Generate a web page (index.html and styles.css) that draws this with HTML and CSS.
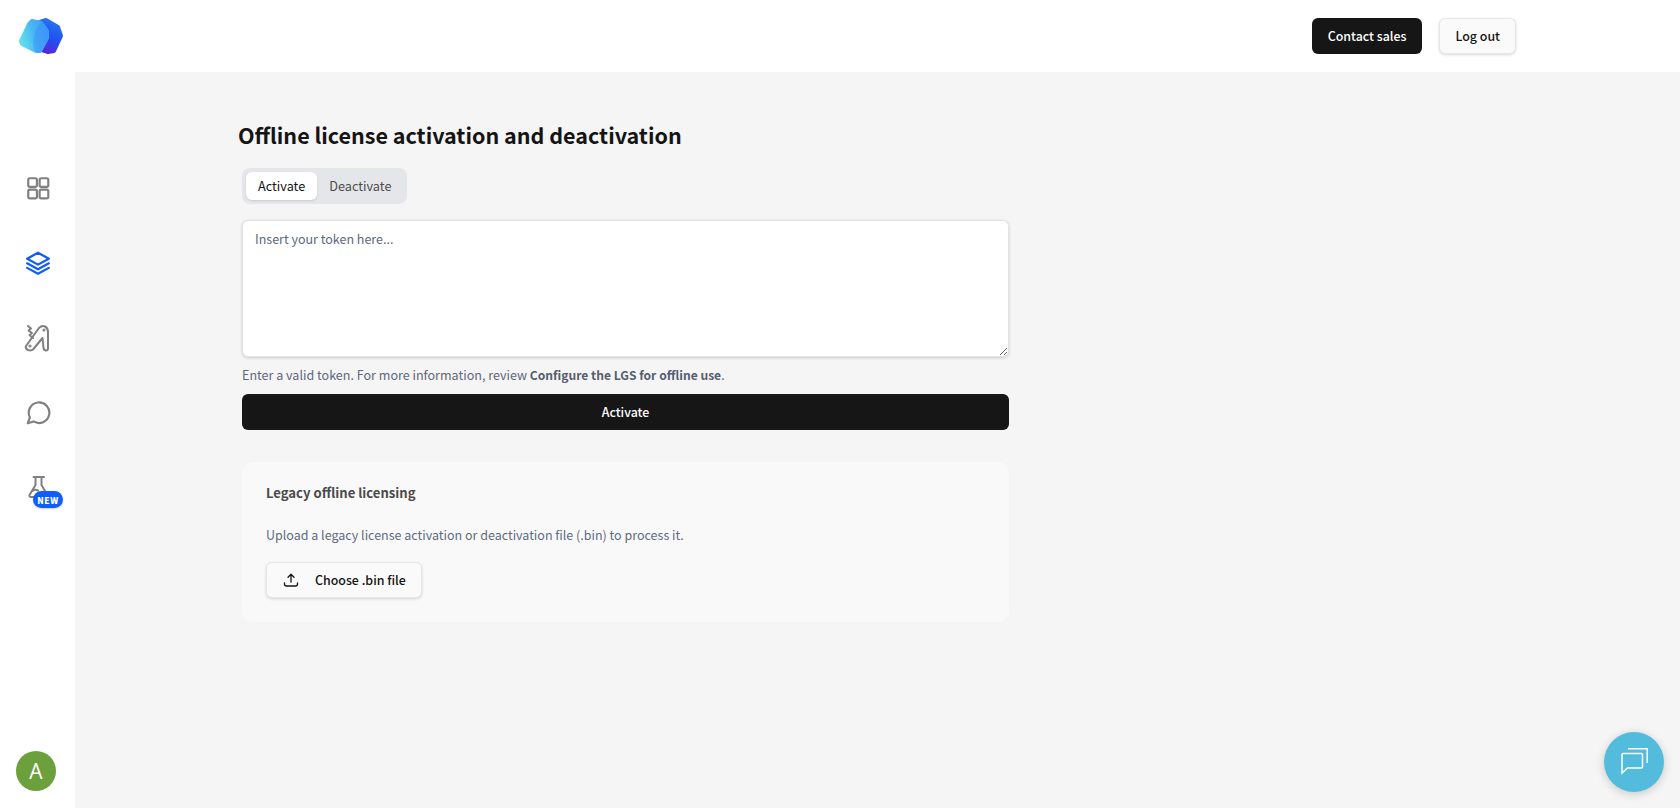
FILE: index.html
```html
<!DOCTYPE html>
<html lang="en">
<head>
<meta charset="utf-8">
<title>Offline license activation</title>
<link rel="stylesheet" href="styles.css">
</head>
<body>
<header class="topbar">
  <svg class="logo" viewBox="0 0 72 72" width="72" height="72" aria-label="logo">
    <defs>
      <linearGradient id="lgBack" x1="0.3" y1="1" x2="0.6" y2="0">
        <stop offset="0" stop-color="#5528dd"/><stop offset="0.5" stop-color="#1d55ee"/><stop offset="1" stop-color="#2a72f3"/>
      </linearGradient>
      <linearGradient id="lgFront" x1="0" y1="0.65" x2="1" y2="0.35">
        <stop offset="0" stop-color="#5fdfea"/><stop offset="0.6" stop-color="#46b0f4"/><stop offset="1" stop-color="#42a0f8"/>
      </linearGradient>
    </defs>
    <path d="M46 20 L58 27 L61 36 L54 51 L48 52 L42 50 L40 22 Z" fill="url(#lgBack)" stroke="url(#lgBack)" stroke-width="4" stroke-linejoin="round"/>
    <path d="M32 21 L41 23 L47 31 L47 38 L40 51 L36 51 L22 44 L21 41 L29 24 Z" fill="url(#lgFront)" stroke="url(#lgFront)" stroke-width="4" stroke-linejoin="round"/>
    <path d="M41.500 21.500 L48.500 31 L48.500 38 L41 52.500 L35 52 Q33 47 33 42 Q34 30 41.500 21.500 Z" fill="#3a8ffb" opacity="0.45"/>
  </svg>
  <div class="top-actions">
    <button class="btn btn-dark">Contact sales</button>
    <button class="btn btn-light">Log out</button>
  </div>
</header>
<div class="shell">
  <nav class="sidebar">
    <div class="nav-list">
      <a class="nav-item">
        <svg viewBox="0 0 24 24" width="26" height="26" class="ico"><rect x="3" y="3" width="8" height="8" rx="1.500"/><rect x="13.500" y="3" width="8" height="8" rx="1.500"/><rect x="3" y="13.500" width="8" height="8" rx="1.500"/><rect x="13.500" y="13.500" width="8" height="8" rx="1.500"/></svg>
      </a>
      <a class="nav-item">
        <svg viewBox="0 0 24 24" width="26" height="26" class="ico ico-active"><path d="M12 2.500 L22 8 L12 13.500 L2 8 Z"/><path d="M2 12.300 L12 17.800 L22 12.300"/><path d="M2 16.500 L12 22 L22 16.500"/></svg>
      </a>
      <a class="nav-item">
        <svg viewBox="0 0 36 36" width="36" height="36" class="ico"><path d="M6 26 L19 8 Q22 5 25 6.500 Q28 8 28 12 L28 28 Q28 30.500 26 30.500 Q24 30.500 23.500 28 L22.500 18 L13 29.500 Q11 31 8 30 Q5 28.500 6 26 Z"/><path d="M8 6 L11 8.500 L8.500 10.500 L12 13 L9.500 15 L13 18"/><circle cx="24" cy="10" r="0.600"/><circle cx="10" cy="26" r="0.600"/></svg>
      </a>
      <a class="nav-item">
        <svg viewBox="0 0 24 24" width="26" height="26" class="ico"><path d="M2.500 21.500 L4.500 16 A9.500 9.500 0 1 1 8 19.800 Z"/></svg>
      </a>
      <a class="nav-item">
        <svg viewBox="0 0 36 36" width="36" height="36" class="ico"><path d="M13.500 7 H24"/><path d="M15.500 7 V15 L9.500 25 Q9 27 11 27 H18"/><path d="M21.500 7 V15 L25 21"/><path d="M12.500 21 Q15 19 18 20.500"/></svg>
        <span class="badge">NEW</span>
      </a>
    </div>
    <div class="avatar">A</div>
  </nav>
  <main class="content">
    <h1 class="title">Offline license activation and deactivation</h1>
    <div class="column">
      <div class="tabs">
        <button class="tab tab-on">Activate</button>
        <button class="tab">Deactivate</button>
      </div>
      <textarea class="token" placeholder="Insert your token here..."></textarea>
      <p class="hint">Enter a valid token. For more information, review <b>Configure the LGS for offline use</b>.</p>
      <button class="btn btn-dark btn-wide">Activate</button>
      <section class="legacy">
        <h2 class="legacy-title">Legacy offline licensing</h2>
        <p class="legacy-text">Upload a legacy license activation or deactivation file (.bin) to process it.</p>
        <button class="btn btn-light btn-file">
          <svg viewBox="0 0 16 16" width="16" height="16" class="upload"><path d="M8 10 V2.500 M5 5.200 L8 2.200 L11 5.200"/><path d="M1.500 11 V12 Q1.500 14 3.500 14 H12.500 Q14.500 14 14.500 12 V11"/></svg>
          <span>Choose .bin file</span>
        </button>
      </section>
    </div>
  </main>
</div>
<button class="fab" aria-label="Chat">
  <svg viewBox="0 0 28 28" width="28" height="28"><path d="M8 .8 H27.200 V15"/><path d="M2 6.500 Q2 5.500 3 5.500 H21.500 Q22.500 5.500 22.500 6.500 V19 Q22.500 20 21.500 20 H7.500 L2 25 Z"/></svg>
</button>
</body>
</html>
```

FILE: styles.css
```css
* { box-sizing: border-box; }
html, body { margin: 0; height: 808px; overflow: hidden; background: #fff; }
body { font-family: "Noto Sans CJK JP", "Noto Sans", sans-serif; font-size: 12.500px; color: #141414; }
button { font-family: inherit; }

.topbar { height: 72px; display: flex; align-items: center; justify-content: space-between; padding-right: 164px; background: #fff; }
.logo { display: block; }
.top-actions { display: flex; gap: 17px; }
.top-actions .btn { padding: 0 15px; }

.btn { height: 36px; border-radius: 6px; font-size: 12.400px; font-weight: 500; border: 1px solid transparent; cursor: pointer; padding: 0 16px; white-space: nowrap; }
.btn-dark { background: #161616; color: #fff; }
.btn-light { background: #fafafa; color: #141414; border-color: #e6e6e8; box-shadow: 0 1px 3px rgba(0,0,0,.15); }

.shell { display: flex; height: 736px; }
.sidebar { width: 75px; display: flex; flex-direction: column; align-items: center; padding: 78px 0 17px; background: #fff; }
.nav-list { display: flex; flex-direction: column; }
.nav-item { position: relative; height: 75px; width: 75px; display: flex; align-items: center; justify-content: center; }
.ico { fill: none; stroke: #808080; stroke-width: 2; stroke-linejoin: round; stroke-linecap: round; }
.ico-active { stroke: #0f5ef7; stroke-width: 2.100; }
.badge { position: absolute; left: 33px; top: 41px; width: 30px; height: 17px; border-radius: 9px; background: #0f5ef7; color: #fff; font-size: 8.500px; font-weight: 900; letter-spacing: .5px; display: flex; align-items: center; justify-content: center; box-shadow: 0 1px 2px rgba(0,0,0,.2); }
.avatar { margin-top: auto; margin-left: -3px; width: 40px; height: 40px; border-radius: 50%; background: #6ba03c; color: #fff; font-family: "Open Sans", sans-serif; font-size: 21px; display: flex; align-items: center; justify-content: center; }

.content { flex: 1; background: #f5f5f5; padding: 46px 0 0 163px; }
.title { margin: 0 0 16px; font-size: 21.500px; line-height: 34px; font-weight: 700; color: #141414; }
.column { margin-left: 4px; width: 767px; display: flex; flex-direction: column; align-items: stretch; }

.tabs { align-self: flex-start; display: flex; align-items: center; height: 36px; padding: 4px; background: #e5e6e9; border-radius: 8px; }
.tab { height: 28px; border: 0; background: transparent; border-radius: 6px; padding: 0 12px 2px; font-size: 12.700px; color: #4d4d4d; }
.tab-on { background: #fff; color: #141414; box-shadow: 0 1px 2px rgba(0,0,0,.12); }

.token { margin-top: 16px; height: 137px; width: 100%; resize: vertical; border: 1px solid #e3e3e6; border-radius: 6px; background: #fff; padding: 8px 12px; font-family: inherit; font-size: 12.500px; line-height: 20px; box-shadow: 0 1px 3px rgba(0,0,0,.18); outline: none; display: block; }
.token::placeholder { color: #5b6880; opacity: 1; }
.hint { margin: 8px 0 9px; font-size: 12.550px; line-height: 20px; color: #5f6778; }
.hint b { font-size: 12.100px; font-weight: 700; color: #555d70; }
.btn-wide { width: 100%; }

.legacy { margin-top: 32px; height: 160px; background: #f9f9fa; border-radius: 12px; padding: 19px 24px; }
.legacy-title { margin: 0; font-size: 13.100px; line-height: 24px; font-weight: 700; color: #4a4a4a; }
.legacy-text { margin: 20px 0 0; font-size: 12.500px; line-height: 20px; color: #5f6b80; }
.btn-file { margin-top: 17px; width: 156px; display: flex; align-items: center; gap: 16px; padding: 0 16px; }
.upload { fill: none; stroke: #141414; stroke-width: 1.300; stroke-linecap: round; stroke-linejoin: round; flex: none; }

.fab { position: fixed; left: 1604px; top: 732px; width: 60px; height: 60px; border-radius: 50%; border: 0; background: #53bbdb; box-shadow: 0 2px 10px rgba(0,0,0,.18); display: flex; align-items: center; justify-content: center; padding: 0; }
.fab svg { fill: none; stroke: #fff; stroke-width: 1.500; }
```
